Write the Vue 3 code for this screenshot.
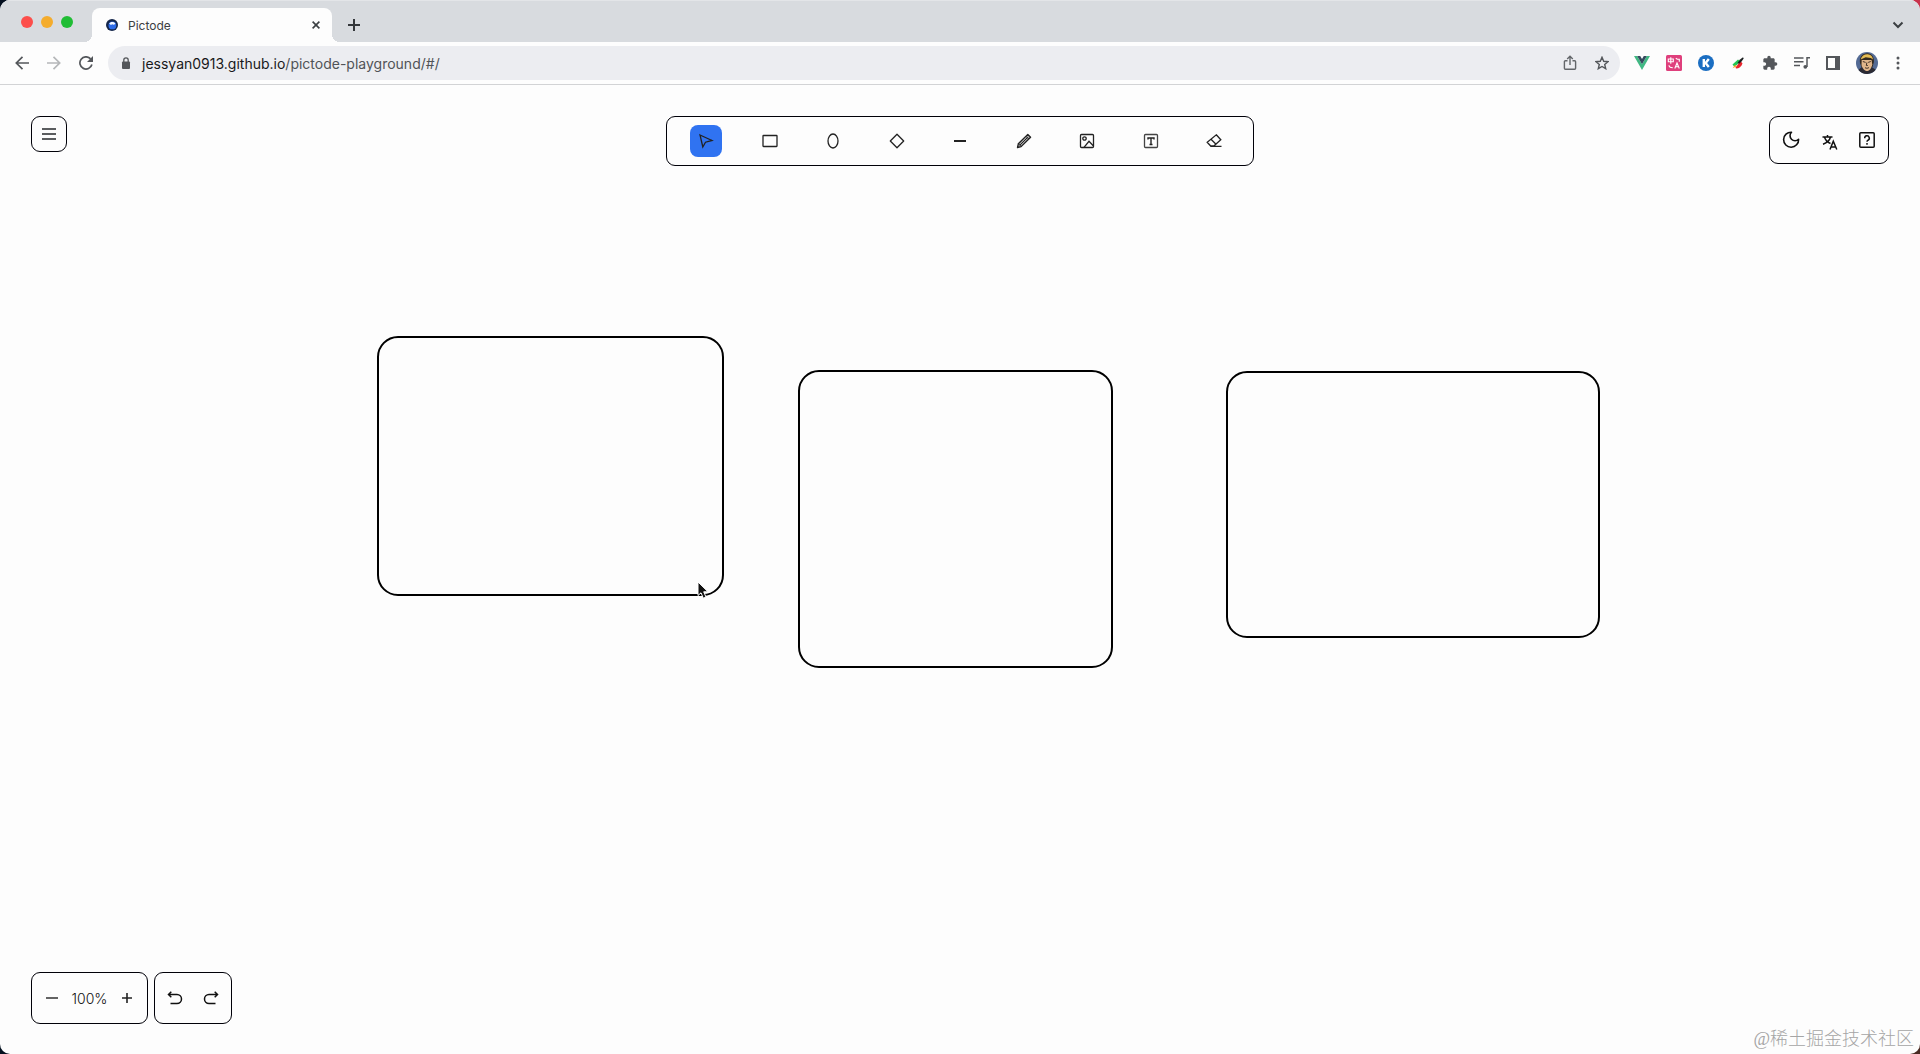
<script setup>
import { ref } from "vue";

const urlHost = "jessyan0913.github.io";
const urlPath = "/pictode-playground/#/";
const activeTool = ref("select");
const zoom = ref(100);

const tools = [
  { name: "select", label: "Select" },
  { name: "rect", label: "Rectangle" },
  { name: "ellipse", label: "Ellipse" },
  { name: "diamond", label: "Diamond" },
  { name: "line", label: "Line" },
  { name: "pencil", label: "Pencil" },
  { name: "image", label: "Image" },
  { name: "text", label: "Text" },
  { name: "eraser", label: "Eraser" },
];

// nodes on the canvas, in canvas coordinates
const shapes = [
  { x: 377, y: 251, width: 347, height: 260 },
  { x: 798, y: 285, width: 315, height: 298 },
  { x: 1226, y: 286, width: 374, height: 267 },
];

function shapeStyle(shape) {
  return {
    left: `${shape.x}px`,
    top: `${shape.y}px`,
    width: `${shape.width}px`,
    height: `${shape.height}px`,
  };
}

function changeZoom(step) {
  zoom.value = Math.min(400, Math.max(10, zoom.value + step));
}
</script>

<template>
  <div class="window">
    <header class="chrome">
      <div class="tab-strip">
        <div class="lights">
          <span class="light red"></span>
          <span class="light yellow"></span>
          <span class="light green"></span>
        </div>
        <div class="tab">
          <svg class="favicon" viewBox="0 0 12 12">
            <circle cx="6" cy="6" r="6" fill="#14264a" />
            <circle cx="6.4" cy="6.4" r="3.9" fill="#2d6be8" />
            <path d="M3.2 4.6C4 2.6 8.6 2.4 9.3 4.9L7.6 5.8 6.2 5.2 4.9 6z" fill="#f3f7ff" />
          </svg>
          <span class="tab-title">Pictode</span>
          <button class="plain tab-close" aria-label="Close tab">
            <svg width="8" height="8" viewBox="0 0 8 8">
              <path d="M.6.6l6.8 6.8M7.4.6L.6 7.4" stroke="#3c4043" stroke-width="1.6" />
            </svg>
          </button>
        </div>
        <button class="plain new-tab" aria-label="New tab">
          <svg width="12" height="12" viewBox="0 0 12 12">
            <path d="M6 0v12M0 6h12" stroke="#34373b" stroke-width="2" />
          </svg>
        </button>
        <button class="plain tab-search" aria-label="Search tabs">
          <svg width="12" height="8" viewBox="0 0 12 8" fill="none">
            <path d="M1.5 1.5L6 6l4.500-4.500" stroke="#3c4043" stroke-width="2" />
          </svg>
        </button>
      </div>

      <div class="toolbar">
        <nav class="nav">
          <button class="plain" aria-label="Back">
            <svg width="14" height="14" viewBox="0 0 14 14" fill="none" stroke="#54575b" stroke-width="1.700">
              <path d="M14 7H1.400M7.500.8L1.300 7l6.200 6.200" />
            </svg>
          </button>
          <button class="plain" aria-label="Forward">
            <svg width="14" height="14" viewBox="0 0 14 14" fill="none" stroke="#b5b7b9" stroke-width="1.700">
              <path d="M0 7h12.600M6.500.8L12.700 7l-6.200 6.200" />
            </svg>
          </button>
          <button class="plain" aria-label="Reload">
            <svg width="14" height="14" viewBox="0 0 14 14" fill="none">
              <path d="M12.900 8.500A6.100 6.100 0 1 1 11.600 2.900" stroke="#54575b" stroke-width="1.700" />
              <path d="M14 0v6H8z" fill="#54575b" />
            </svg>
          </button>
        </nav>

        <div class="omnibox">
          <svg width="10" height="12" viewBox="0 0 10 12">
            <rect x="1" y="4.400" width="8" height="7.600" rx="1" fill="#54575b" />
            <path d="M2.800 5V3a2.200 2.200 0 0 1 4.400 0v2" fill="none" stroke="#54575b" stroke-width="1.300" />
          </svg>
          <a class="url" href="#/">{{ urlHost }}<span class="path">{{ urlPath }}</span></a>
          <button class="plain" aria-label="Share">
            <svg width="14" height="16" viewBox="0 0 14 16" fill="none" stroke="#63666a" stroke-width="1.400">
              <path d="M4.500 5.700H2.400a1 1 0 0 0-1 1v6.600a1 1 0 0 0 1 1h9.200a1 1 0 0 0 1-1V6.700a1 1 0 0 0-1-1H9.500M7 10V1.400M4.200 4L7 1.200 9.800 4" />
            </svg>
          </button>
          <button class="plain" aria-label="Bookmark">
            <svg width="14" height="14" viewBox="0 0 14 14" fill="none" stroke="#54575b" stroke-width="1.400">
              <path d="M7 1.300l1.700 4 4.300.4-3.300 2.800 1 4.200L7 10.500l-3.700 2.200 1-4.200L1 5.700l4.300-.4z" />
            </svg>
          </button>
        </div>

        <div class="extensions">
          <button class="plain" aria-label="Vue devtools">
            <svg width="16" height="14" viewBox="0 0 16 14">
              <path d="M0 0h3.200L8 8.300 12.800 0H16L8 14z" fill="#41b883" />
              <path d="M3.200 0h3L8 3.100 9.800 0h3L8 8.300z" fill="#35495e" />
            </svg>
          </button>
          <button class="plain" aria-label="Translate page">
            <svg width="16" height="16" viewBox="0 0 16 16" fill="none">
              <rect width="16" height="16" rx="1.500" fill="#df3f7c" />
              <path d="M2.300 4h5v2.700h-5zM4.800 2.200v6.500M9.800 3.200l1.500 1h2v2.600M3 10.300c0 2 1 2.500 3.800 2.500M8.800 13.500L11 8l2.300 5.500M9.700 11.700h2.700" stroke="#fff" stroke-width="1.100" />
            </svg>
          </button>
          <button class="plain" aria-label="K extension">
            <svg width="16" height="16" viewBox="0 0 16 16">
              <circle cx="8" cy="8" r="8" fill="#1b6ec2" />
              <path d="M5.800 4v8M10.800 4L7.600 8l3.200 4" fill="none" stroke="#fff" stroke-width="2.400" />
            </svg>
          </button>
          <button class="plain" aria-label="Color picker">
            <svg width="16" height="16" viewBox="0 0 16 16">
              <path d="M2.500 9.500L8 4.500l2.500 2-6 5.500z" fill="#21c653" />
              <path d="M5.500 12.500L10.500 6l2 2.500c-1 3-3.500 5-6.500 5z" fill="#e9242c" />
              <path d="M2.600 13.200l2.600-3.500 1.600 1.500z" fill="#f7a527" />
              <path d="M7.500 8L10 4.500l3-2.200.7 1.200-2.200 3-2.300 2.300z" fill="#1d2021" />
            </svg>
          </button>
          <button class="plain" aria-label="Extensions">
            <svg width="16" height="16" viewBox="0 0 24 24" fill="#54575b">
              <path d="M20.500 11H19V7c0-1.100-.9-2-2-2h-4V3.500a2.500 2.500 0 0 0-5 0V5H4c-1.100 0-1.990.9-1.990 2v3.800H3.500c1.490 0 2.700 1.210 2.700 2.700s-1.210 2.700-2.700 2.700H2V20c0 1.100.9 2 2 2h3.800v-1.500c0-1.490 1.210-2.700 2.700-2.700s2.700 1.210 2.700 2.700V22H17c1.100 0 2-.9 2-2v-4h1.500a2.500 2.500 0 0 0 0-5z" />
            </svg>
          </button>
          <button class="plain" aria-label="Media">
            <svg width="16" height="14" viewBox="0 0 16 14" fill="none" stroke="#54575b" stroke-width="1.500">
              <path d="M0 2h9.500M0 5.700h9.500M0 9.400h6M13 11V1.800h3" />
              <circle cx="11.300" cy="10.800" r="1.900" fill="#54575b" stroke="none" />
            </svg>
          </button>
          <button class="plain" aria-label="Side panel">
            <svg width="14" height="14" viewBox="0 0 14 14">
              <path d="M1 1h12v12H1z" fill="none" stroke="#54575b" stroke-width="2" />
              <path d="M9 0h5v14H9z" fill="#54575b" />
            </svg>
          </button>
          <button class="plain" aria-label="Profile">
            <svg width="22" height="22" viewBox="0 0 22 22">
              <circle cx="11" cy="11" r="11" fill="#536a94" />
              <path d="M2.500 18c1.500-2 3.500-3 4.500-4h8c1.500 2 3.500 2.500 4.700 3.700A11 11 0 0 1 2.500 18z" fill="#2b2a33" />
              <path d="M4 11C3 5 6.500 1 11.500 1.200c4 .3 6.700 3.300 6.400 8.800l-1.400 5H5.500z" fill="#33291f" />
              <path d="M5.700 8h9.800l.8 4.500c-.8 3.800-2.900 6.500-5.300 6.500s-4.800-2.700-5.500-6z" fill="#e0b58a" />
              <path d="M4.700 7.500C5.500 3.700 8.500 2 11.700 2.200c3 .2 5 2.300 5.300 5.300L14.800 6 9.700 5.200z" fill="#e5bd55" />
              <path d="M6.800 9.500l2.800.9M12.200 10.400l2.600-.9M9 15.700c1.500.8 2.800.7 4-.2M10.900 10.500l-.6 3h1.500" fill="none" stroke="#423126" />
            </svg>
          </button>
          <button class="plain browser-menu" aria-label="Browser menu">
            <svg width="4" height="14" viewBox="0 0 4 14" fill="#54575b">
              <circle cx="2" cy="2" r="1.500" />
              <circle cx="2" cy="7" r="1.500" />
              <circle cx="2" cy="12" r="1.500" />
            </svg>
          </button>
        </div>
      </div>
    </header>

    <main class="board">
      <div
        v-for="(shape, index) in shapes"
        :key="index"
        class="shape"
        :style="shapeStyle(shape)"
      ></div>

      <div class="board-top">
        <div class="side">
          <button class="panel menu" aria-label="Menu">
            <svg width="14" height="12" viewBox="0 0 14 12" stroke="#26282b" stroke-width="1.700">
              <path d="M0 1h14M0 6h14M0 11h14" />
            </svg>
          </button>
        </div>

        <div class="panel tools">
          <button
            v-for="tool in tools"
            :key="tool.name"
            class="plain tool"
            :class="{ active: activeTool === tool.name }"
            :aria-label="tool.label"
            @click="activeTool = tool.name"
          >
            <svg width="16" height="16" viewBox="0 0 16 16" fill="none" stroke="#222" stroke-width="1.300">
              <path v-if="tool.name === 'select'" d="M2 2l12 5.500-6.500 1.700L4.800 14z" />
              <rect v-else-if="tool.name === 'rect'" x="1" y="2.500" width="14" height="11" rx=".5" />
              <ellipse v-else-if="tool.name === 'ellipse'" cx="8" cy="8" rx="5" ry="7" />
              <path v-else-if="tool.name === 'diamond'" d="M8 1.300L14.700 8 8 14.700 1.300 8z" stroke-linejoin="round" />
              <path v-else-if="tool.name === 'line'" d="M2 8h12" stroke-width="2" />
              <template v-else-if="tool.name === 'pencil'">
                <path d="M1.500 14.500l.8-3.700 9.500-9.400 2.800 2.800-9.500 9.400z" fill="#aaa" stroke-linejoin="round" />
                <path d="M2.500 10.800l2.700 2.700M10 3.300l2.700 2.700M4 12l7.500-7.500" stroke-width="1" />
              </template>
              <template v-else-if="tool.name === 'image'">
                <rect x="1.500" y="1.500" width="13" height="13" rx="1" />
                <circle cx="5.500" cy="5.500" r="1.700" />
                <path d="M5 14.300l5-6 4.500 4.700" />
              </template>
              <template v-else-if="tool.name === 'text'">
                <rect x="1.500" y="1.500" width="13" height="13" rx="1" stroke="#444" />
                <path d="M5 6.500V5h6v1.500M8 5v6.500M6.500 11.500h3" stroke-width="1.400" />
              </template>
              <path v-else d="M10.300 1.800l4.500 5-7 6.200H4.700L1.200 9.300zM5 6.200l5 5M4.500 13.400h11" />
            </svg>
          </button>
        </div>

        <div class="side right">
          <div class="panel settings">
            <button class="plain" aria-label="Dark mode">
              <svg width="18" height="18" viewBox="0 0 18 18" fill="none" stroke="#111" stroke-width="1.600">
                <path d="M9.500 1.200A7.500 7.500 0 1 0 16.600 8.300 4.300 4.300 0 1 1 9.500 1.200z" stroke-linejoin="round" />
              </svg>
            </button>
            <button class="plain" aria-label="Language">
              <svg class="lang" width="16" height="16" viewBox="0 0 16 16" fill="none" stroke="#111" stroke-width="1.500">
                <path d="M.5 3h10M5.500 1v2M2.500 3c.8 3 3 5.200 6 6.500M8.500 3C7.700 6.200 5 8.800 1 10.200M8 15.500l3.300-8.300 3.500 8.300M9.200 13h4.300" />
              </svg>
            </button>
            <button class="plain" aria-label="Help">
              <svg width="16" height="16" viewBox="0 0 16 16" fill="none" stroke="#111" stroke-width="1.500">
                <rect x=".8" y=".8" width="14.400" height="14.400" rx="1" />
                <path d="M5.700 6.200a2.300 2.300 0 1 1 3.300 2c-.7.4-1 .8-1 1.500M8 11v1.700" />
              </svg>
            </button>
          </div>
        </div>
      </div>

      <div class="board-bottom">
        <div class="panel zoom">
          <button class="plain" aria-label="Zoom out" @click="changeZoom(-10)">
            <svg width="12" height="12" viewBox="0 0 12 12">
              <path d="M0 6h12" stroke="#222" stroke-width="1.400" />
            </svg>
          </button>
          <span class="zoom-value">{{ zoom }}%</span>
          <button class="plain" aria-label="Zoom in" @click="changeZoom(10)">
            <svg width="12" height="12" viewBox="0 0 12 12">
              <path d="M1 6h10M6 1v10" stroke="#222" stroke-width="1.600" />
            </svg>
          </button>
        </div>
        <div class="panel history">
          <button class="plain" aria-label="Undo">
            <svg width="16" height="14" viewBox="0 0 16 14" fill="none" stroke="#111" stroke-width="1.500">
              <path d="M1.500 3.500H10a4.500 4.500 0 0 1 0 9H3.500M4.300.8L1.500 3.500l2.800 2.700" />
            </svg>
          </button>
          <button class="plain" aria-label="Redo">
            <svg width="16" height="14" viewBox="0 0 16 14" fill="none" stroke="#111" stroke-width="1.500">
              <path d="M14.500 3.500H6a4.500 4.500 0 0 0 0 9h6.500M11.700.8l2.800 2.700-2.800 2.700" />
            </svg>
          </button>
        </div>
      </div>

      <svg class="cursor" width="14" height="20" viewBox="0 0 14 20">
        <path d="M1 1v13.500l3-2.700 2.300 5.400 2.700-1.100-2.300-5.300H11z" fill="#111" stroke="#fff" stroke-width="1" />
      </svg>
      <span class="watermark">@稀土掘金技术社区</span>
    </main>
  </div>
</template>

<style>
body {
  margin: 0;
  background:
    radial-gradient(circle at 100% 0, #c8324c 20px, transparent 20px),
    radial-gradient(circle at 100% 100%, #4a2a22 20px, transparent 20px),
    #04101f;
}
</style>

<style scoped>
* {
  box-sizing: border-box;
}

.window {
  min-height: 100vh;
  display: flex;
  flex-direction: column;
  border-radius: 10px;
  overflow: hidden;
  background: #fdfdfd;
  font-family: Inter, "Liberation Sans", sans-serif;
}

.plain {
  appearance: none;
  display: inline-flex;
  align-items: center;
  justify-content: center;
  padding: 0;
  border: 0;
  background: none;
  cursor: pointer;
}

svg {
  display: block;
  flex: none;
}

.tab-strip {
  height: 42px;
  display: flex;
  padding: 0 16px 0 21px;
  background: #d8dbdf;
  border-top: 1px solid #e3e5e8;
}

.lights {
  display: flex;
  gap: 8px;
  align-items: center;
  width: 71px;
}

.light {
  width: 12px;
  height: 12px;
  border-radius: 50%;
}

.red {
  background: #fc4e4b;
}

.yellow {
  background: #f4ac2d;
}

.green {
  background: #20bd35;
}

.tab {
  position: relative;
  display: flex;
  align-items: center;
  width: 240px;
  margin-top: 7px;
  padding: 0 12px 0 14px;
  border-radius: 8px 8px 0 0;
  background: #fdfdfd;
}

.tab::before,
.tab::after {
  content: "";
  position: absolute;
  bottom: 0;
  width: 8px;
  height: 8px;
}

.tab::before {
  right: 100%;
  background: radial-gradient(circle at 0 0, #d8dbdf 8px, #fdfdfd 8px);
}

.tab::after {
  left: 100%;
  background: radial-gradient(circle at 100% 0, #d8dbdf 8px, #fdfdfd 8px);
}

.favicon {
  width: 12px;
  height: 12px;
}

.tab-title {
  flex: 1;
  margin-left: 10px;
  font-size: 12px;
  color: #3c4043;
}

.new-tab {
  margin: 7px 0 0 16px;
}

.tab-search {
  margin: 7px 0 0 auto;
}

.toolbar {
  height: 43px;
  display: flex;
  align-items: center;
  padding: 0 18px 0 15px;
  border-bottom: 1px solid #d2d3d5;
}

.nav {
  display: flex;
  gap: 18px;
  margin-right: 15px;
}

.omnibox {
  flex: 1;
  display: flex;
  align-items: center;
  gap: 18px;
  height: 34px;
  padding: 0 11px 0 13px;
  border-radius: 17px;
  background: #ecedf1;
}

.url {
  flex: 1;
  margin-left: -7px;
  font-size: 14px;
  color: #18191b;
  text-decoration: none;
}

.path {
  color: #505357;
}

.extensions {
  display: flex;
  align-items: center;
  gap: 16px;
  margin-left: 14px;
}

.browser-menu {
  width: 8px;
}

.board {
  position: relative;
  flex: 1;
  display: flex;
  flex-direction: column;
  justify-content: space-between;
  padding: 31px 31px 30px;
}

.board-top {
  display: flex;
  align-items: flex-start;
}

.side {
  flex: 1;
  display: flex;
}

.right {
  justify-content: flex-end;
}

.panel {
  display: flex;
  align-items: center;
  border: 1px solid #000008;
  border-radius: 9px;
  background: #fdfdfd;
}

.menu {
  justify-content: center;
  width: 36px;
  height: 36px;
  padding: 0;
}

.tools {
  justify-content: space-between;
  width: 588px;
  height: 50px;
  padding: 0 23px;
}

.tool {
  width: 32px;
  height: 32px;
  border-radius: 8px;
}

.active {
  background: #3073f1;
}

.settings {
  justify-content: space-between;
  width: 120px;
  height: 48px;
  padding: 0 13px 0 12px;
}

.lang {
  margin-top: 4px;
}

.board-bottom {
  display: flex;
  gap: 6px;
}

.zoom {
  justify-content: space-between;
  width: 117px;
  height: 52px;
  padding: 0 14px;
}

.zoom-value {
  font-size: 14px;
  font-weight: 300;
  color: #111;
}

.history {
  justify-content: space-between;
  width: 78px;
  height: 52px;
  padding: 0 12px;
}

.shape {
  position: absolute;
  border: 2px solid #000;
  border-radius: 21px;
}

.cursor {
  position: absolute;
  left: 697px;
  top: 496px;
}

.watermark {
  position: absolute;
  right: 6px;
  bottom: 3px;
  font-family: "Liberation Serif", "Noto Sans CJK SC", serif;
  font-size: 18px;
  font-weight: 300;
  line-height: 24px;
  color: #a5a5a5;
}
</style>
